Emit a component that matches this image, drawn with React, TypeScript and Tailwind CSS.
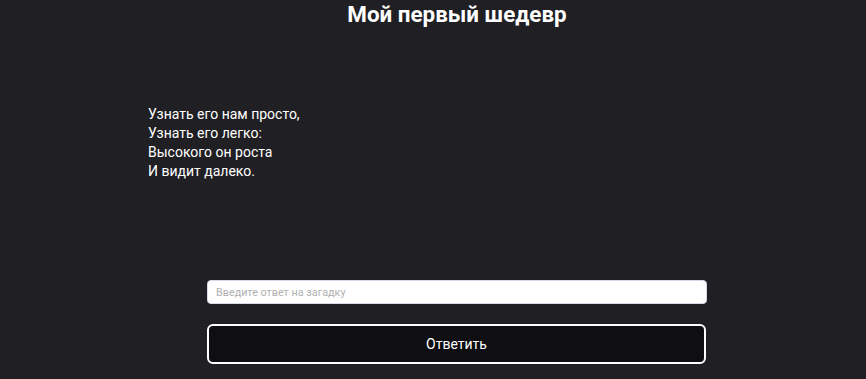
import React from "react";

export default function App() {
  return (
    <div className="min-h-[379px] w-full bg-[#1f1f24] text-white" style={{ fontFamily: "Roboto, 'Noto Sans', sans-serif" }}>
      <div className="flex flex-col">
        <h1 className="ml-[207px] w-[500px] pt-[1px] text-center text-[22.4px] font-bold leading-[26px]">Мой первый шедевр</h1>
        <div className="ml-[148px] mt-[78px] text-[14px] leading-[19px]">
          <p>Узнать его нам просто,</p>
          <p>Узнать его легко:</p>
          <p>Высокого он роста</p>
          <p>И видит далеко.</p>
        </div>
        <div className="ml-[207px] mt-[99px] flex w-[500px] flex-col gap-[20px]">
          <input
            className="h-[24px] w-full rounded-[4px] border border-[#d4dbe6] bg-white px-[8px] text-[10.8px] text-black outline-none placeholder:text-[#b0b0b0]"
            placeholder="Введите ответ на загадку"
          />
          <button className="h-[40px] w-[499px] rounded-[6px] border-2 border-white bg-[#0f0e11] text-[14px] text-white">Ответить</button>
        </div>
      </div>
    </div>
  );
}
